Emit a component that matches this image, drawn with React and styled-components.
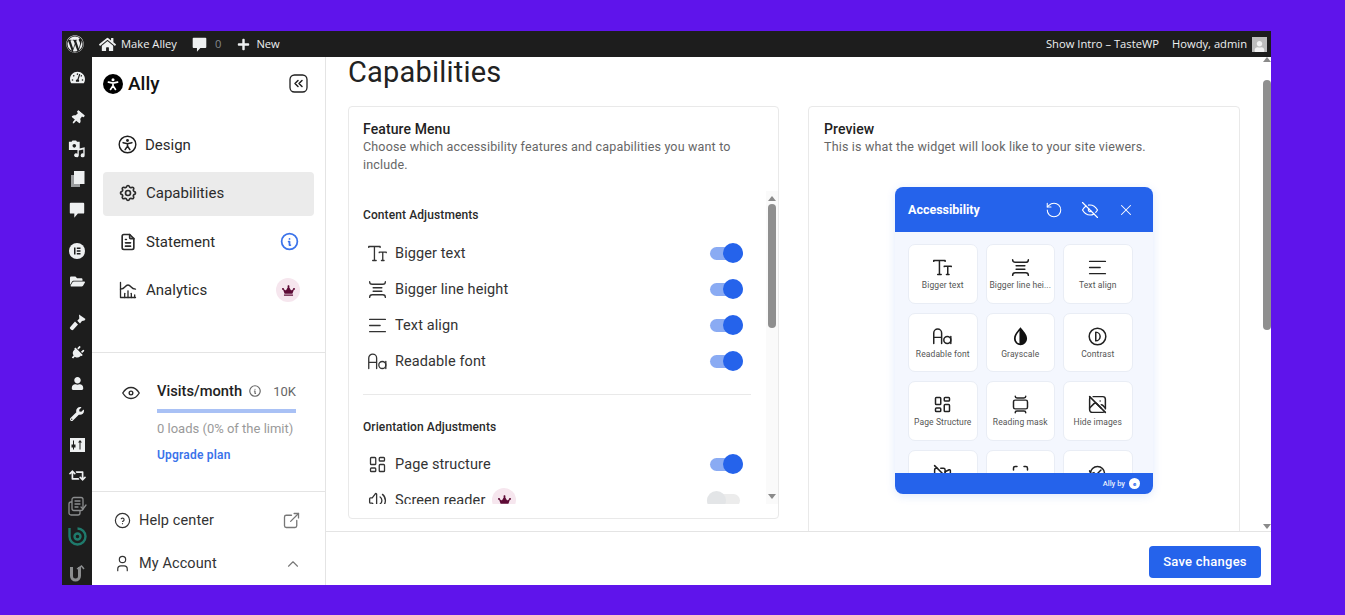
import React from "react"
import styled, { createGlobalStyle } from "styled-components"
import {
	FaWordpress,
	FaHome,
	FaPlus,
	FaTachometerAlt,
	FaThumbtack,
	FaFolderOpen,
	FaPlug,
	FaUser,
	FaWrench,
	FaRetweet,
	FaCrown,
} from "react-icons/fa"
import {
	TbSettings,
	TbFileText,
	TbChartHistogram,
	TbInfoCircle,
	TbHelpCircle,
	TbExternalLink,
	TbUser,
	TbChevronUp,
	TbEye,
	TbEyeOff,
	TbX,
	TbLayoutDashboard,
	TbPhotoOff,
	TbVideoOff,
	TbVolume,
} from "react-icons/tb"
import { RotateCcw } from "lucide-react"

const BLUE = "#2563eb"

const Global = createGlobalStyle`
	html, body { margin: 0; padding: 0; background: #5f14eb; }
	* { box-sizing: border-box; }
	body { font-family: Roboto, "Liberation Sans", sans-serif; color: #1f1f1f; }
`

// custom drawn icons
const Glyph = ({ size = 20, children, sw = 1.5 }) => (
	<svg width={size} height={size} viewBox="0 0 24 24" fill="none" stroke="currentColor" strokeWidth={sw} strokeLinecap="round" strokeLinejoin="round">
		{children}
	</svg>
)
const TextSizeIcon = (p) => (
	<Glyph {...p}>
		<path d="M2 5V4h13v1M8.500 4v16M6.500 20h4M14 11v-.5h8v.5M18 10.500V20M16.500 20h3" />
	</Glyph>
)
const LineHeightIcon = (p) => (
	<Glyph {...p}>
		<path d="M3 3c0 2 1 3 3 3h12c2 0 3-1 3-3M3 21c0-2 1-3 3-3h12c2 0 3 1 3 3M7 10h10M7 14h10" />
	</Glyph>
)
const AlignIcon = (p) => (
	<Glyph {...p}>
		<path d="M3 5h18M3 12h12M3 19h18" />
	</Glyph>
)
const FontIcon = (p) => (
	<Glyph {...p}>
		<path d="M2 20V8a4.500 4.500 0 0 1 9 0v12M2 13h9" />
		<circle cx="17.500" cy="16" r="4" />
		<path d="M21.500 12v8" />
	</Glyph>
)
const DropIcon = ({ size = 22 }) => (
	<svg width={size} height={size} viewBox="0 0 24 24">
		<path d="M12 1.500c3.500 4.500 7.500 8 7.500 13a7.500 7.500 0 0 1-15 0c0-5 4-8.500 7.500-13z" fill="#111" />
		<path d="M10.800 5.500c-2 2.800-4.300 5.400-4.300 9a5.500 5.500 0 0 0 4.300 5.400z" fill="#fff" />
	</svg>
)
const ContrastIcon = (p) => (
	<Glyph {...p}>
		<circle cx="12" cy="12" r="9.500" />
		<path d="M10 7v10M10 7a5 5 0 0 1 0 10" />
	</Glyph>
)
const MaskIcon = (p) => (
	<Glyph {...p}>
		<rect x="4" y="7" width="16" height="10" rx="2" />
		<path d="M6 2.500c0 1.500 1 2 2 2h8c1 0 2-.5 2-2M6 21.500c0-1.500 1-2 2-2h8c1 0 2 .5 2 2" />
	</Glyph>
)
const FocusIcon = (p) => (
	<Glyph {...p}>
		<path d="M4 8V6a2 2 0 0 1 2-2h2M16 4h2a2 2 0 0 1 2 2v2M4 16v2a2 2 0 0 0 2 2h2M16 20h2a2 2 0 0 0 2-2v-2" />
	</Glyph>
)
const CursorIcon = (p) => (
	<Glyph {...p}>
		<path d="M4 12a8 8 0 1 1 8 8M3 9l1.500 3.500L8 11M12 12l4-4" />
	</Glyph>
)
const AccessIcon = ({ size = 20, filled }) => (
	<svg width={size} height={size} viewBox="0 0 24 24" fill="none">
		<circle cx="12" cy="12" r={filled ? 12 : 10.500} fill={filled ? "#000" : "none"} stroke={filled ? "none" : "#1f1f1f"} strokeWidth="1.800" />
		<circle cx="12" cy="7" r="1.800" fill={filled ? "#fff" : "#1f1f1f"} />
		<path d="M6.500 9.700L12 11l5.500-1.300M12 11v3M12 14l-3 4.500M12 14l3 4.500" stroke={filled ? "#fff" : "#1f1f1f"} strokeWidth="2" strokeLinecap="round" />
	</svg>
)
const CollapseIcon = () => (
	<svg width="19" height="19" viewBox="0 0 19 19" fill="none" stroke="#1f1f1f" strokeWidth="1.300" strokeLinecap="round" strokeLinejoin="round">
		<rect x="1" y="1" width="17" height="17" rx="4.500" />
		<path d="M9 6.500L6 9.500l3 3M13 6.500l-3 3 3 3" strokeWidth="1.500" />
	</svg>
)
const BubbleIcon = ({ size = 17 }) => (
	<svg width={size} height={size} viewBox="0 0 20 20" fill="#eef0f1">
		<path d="M3 2h14a1 1 0 0 1 1 1v10a1 1 0 0 1-1 1h-6l-4 4.500V14H3a1 1 0 0 1-1-1V3a1 1 0 0 1 1-1z" />
	</svg>
)
const MediaIcon = () => (
	<svg width="18" height="18" viewBox="0 0 20 20" fill="#eef0f1">
		<path d="M1 2h3l1-1.500h4L10 2h3v9H1z" />
		<circle cx="7" cy="6.500" r="2" fill="#1d1d1d" />
		<path d="M9 19a2.200 2.200 0 1 1 1.500-3.800V10l8-2v9a2.200 2.200 0 1 1-1.500-2V10.500l-5 1.200V17A2.200 2.200 0 0 1 9 19z" />
	</svg>
)
const PagesIcon = () => (
	<svg width="15" height="16" viewBox="0 0 15 16">
		<path d="M1 4h9v12H1z" fill="#9a9c9e" />
		<path d="M4 0h10.500v13H4z" fill="#eef0f1" />
	</svg>
)
const ElementorIcon = () => (
	<svg width="16" height="16" viewBox="0 0 16 16">
		<circle cx="8" cy="8" r="8" fill="#eef0f1" />
		<path d="M5 4.500h1.500v7H5zM7.800 4.500H11.500V6H7.800zM7.800 7.250H11.500v1.500H7.800zM7.800 10H11.500v1.500H7.800z" fill="#1d1d1d" />
	</svg>
)
const BrushIcon = () => (
	<svg width="17" height="17" viewBox="0 0 17 17" fill="#eef0f1">
		<path d="M10 .5l6.500 4.500-1 1.500-2.500.5-2 2.500-2.700-2.700 2-2.300z" />
		<path d="M6 7.500l3 3-5 5.500c-1 .5-2.500-.5-3-1.500-.3-.8 0-1.300.5-1.800z" />
	</svg>
)
const SlidersIcon = () => (
	<svg width="15" height="14" viewBox="0 0 15 14">
		<path d="M0 0h15v14H0z" fill="#eef0f1" />
		<path d="M3 2.500h1v4h1.500v3H4v2H3v-2H1.500v-3H3zM10 2l2 2.500h-1.500v7h-1v-7H8z" fill="#1d1d1d" />
	</svg>
)
const ChecklistIcon = () => (
	<svg width="19" height="20" viewBox="0 0 19 20" fill="none" stroke="#8b8d8e" strokeWidth="1.300" strokeLinecap="round" strokeLinejoin="round">
		<rect x="1" y="6" width="11" height="13" rx="2" />
		<rect x="4" y="1.500" width="11" height="13" rx="2" fill="#1d1d1d" />
		<path d="M7 5h5M7 8h5M7 11h3M13 11l2 2 3-4" />
	</svg>
)
const BoldIcon = () => (
	<svg width="19" height="19" viewBox="0 0 19 19" fill="none" stroke="#1f7a6c" strokeWidth="2.400">
		<path d="M9.500 1.500a8 8 0 1 1-8 8V1" />
		<circle cx="9.500" cy="9.500" r="3" />
	</svg>
)
const UIcon = () => (
	<svg width="17" height="20" viewBox="0 0 17 20" fill="none" stroke="#8b8d8e" strokeWidth="3">
		<path d="M2.500 3v9a4 4 0 0 0 8 0V3" />
		<path d="M8 5l4.500-3L15 5" strokeWidth="1.500" />
	</svg>
)

const Page = styled.div`
	width: 1345px;
	height: 615px;
	padding: 31px 74px 30px 62px;
	overflow: hidden;
`
const Frame = styled.div`
	height: 554px;
	background: #fff;
	display: flex;
	flex-direction: column;
	overflow: hidden;
`
const AdminBar = styled.header`
	height: 26px;
	flex: none;
	background: #1d1d1d;
	color: #eef0f1;
	display: flex;
	align-items: center;
	font: 11.200px/24px "Open Sans", sans-serif;
	padding: 0 4px 0 4px;
`
const BarItem = styled.span`
	display: flex;
	align-items: center;
	gap: ${(p) => p.$gap || 6}px;
	margin-left: ${(p) => p.$ml || 0}px;
	white-space: nowrap;
	svg { flex: none; }
`
const BarCount = styled.span`
	color: #85898c;
	margin-left: 1px;
`
const Spacer = styled.span`
	flex: 1;
`
const Avatar = styled.span`
	width: 15px;
	height: 15px;
	background: #bdbdbd;
	display: flex;
	align-items: flex-end;
	justify-content: center;
	overflow: hidden;
	color: #f2f2f2;
`
const Body = styled.div`
	flex: 1;
	min-height: 0;
	display: flex;
`
const WpMenu = styled.nav`
	width: 30px;
	flex: none;
	background: #1d1d1d;
	color: #eef0f1;
	display: flex;
	flex-direction: column;
	align-items: center;
	padding-top: 5px;
	overflow: hidden;
`
const WpItem = styled.span`
	height: 30.700px;
	flex: none;
	display: flex;
	align-items: center;
	justify-content: center;
	margin-top: ${(p) => p.$sep || 0}px;
	transform: ${(p) => (p.$tilt ? `rotate(${p.$tilt}deg)` : "none")};
`
const Sidebar = styled.aside`
	width: 234px;
	flex: none;
	border-right: 1px solid #e4e4e4;
	display: flex;
	flex-direction: column;
	overflow: hidden;
`
const Brand = styled.div`
	display: flex;
	align-items: center;
	height: 53px;
	padding: 0 17px 0 11px;
	margin-bottom: 12px;
	flex: none;
`
const BrandName = styled.span`
	font-size: 19px;
	font-weight: 500;
	margin-left: 5px;
	color: #111;
	flex: 1;
`
const NavList = styled.ul`
	list-style: none;
	margin: 0;
	padding: 1.500px 11px 0;
	height: 231px;
	flex: none;
	display: flex;
	flex-direction: column;
	gap: 4.500px;
	border-bottom: 1px solid #e4e4e4;
`
const NavItem = styled.li`
	height: 44px;
	flex: none;
	display: flex;
	align-items: center;
	padding: 0 14px 2px 15px;
	gap: 8px;
	border-radius: 4px;
	font-size: 15px;
	color: #2b2b2b;
	background: ${(p) => (p.$active ? "#ebebeb" : "transparent")};
	svg { flex: none; }
`
const NavLabel = styled.span`
	flex: 1;
`
const CrownBadge = styled.span`
	width: 24px;
	height: 24px;
	border-radius: 50%;
	background: #f6e6ee;
	color: #5e0b36;
	display: inline-flex;
	align-items: center;
	justify-content: center;
	flex: none;
`
const InfoBlue = styled.span`
	color: #3b73ea;
	display: flex;
`
const Usage = styled.section`
	height: 139px;
	flex: none;
	border-bottom: 1px solid #e4e4e4;
	display: flex;
	padding: 27px 29px 0 28px;
	gap: 15px;
`
const UsageEye = styled.span`
	margin-top: 2px;
	color: #2b2b2b;
	display: flex;
	height: 24px;
`
const UsageInfo = styled.div`
	flex: 1;
`
const UsageHead = styled.div`
	display: flex;
	align-items: center;
	height: 22px;
	font-size: 14.700px;
	font-weight: 500;
	color: #222;
	gap: 6px;
	svg { color: #666; }
`
const UsageLimit = styled.span`
	margin-left: auto;
	font-size: 13px;
	font-weight: 400;
	color: #666;
`
const UsageBar = styled.div`
	height: 4px;
	background: #a9c1f5;
	margin-top: 7px;
`
const UsageText = styled.div`
	font-size: 13px;
	color: #9a9a9a;
	margin-top: 8px;
	line-height: 16px;
`
const UpgradeLink = styled.a`
	display: block;
	font-size: 12px;
	font-weight: 600;
	letter-spacing: 0.2px;
	color: #3b73ea;
	margin-top: 11px;
`
const BottomRow = styled.div`
	height: 43px;
	flex: none;
	display: flex;
	align-items: center;
	padding: 0 23px 0 21px;
	gap: 7px;
	font-size: 14.500px;
	letter-spacing: 0.1px;
	color: #333;
	svg { flex: none; }
`
const BottomIcon = styled.span`
	margin-left: auto;
	display: flex;
	color: #777;
`
const BottomList = styled.div`
	padding-top: 7px;
`
const Main = styled.main`
	flex: 1;
	min-width: 0;
	display: flex;
	flex-direction: column;
`
const MainTop = styled.div`
	flex: 1;
	min-height: 0;
	display: flex;
`
const Content = styled.div`
	flex: 1;
	min-width: 0;
	padding: 0 23px 0 22px;
	overflow: hidden;
`
const Title = styled.h1`
	margin: 0;
	height: 49px;
	font-size: 29px;
	line-height: 30px;
	font-weight: 400;
	letter-spacing: 0.2px;
	color: #222;
`
const Cards = styled.div`
	display: flex;
	gap: 29px;
	align-items: flex-start;
`
const Card = styled.section`
	flex: 0 0 ${(p) => p.$w}px;
	height: ${(p) => p.$h}px;
	border: 1px solid #e9e9e9;
	border-radius: 4px;
	overflow: hidden;
	display: flex;
	flex-direction: column;
`
const CardHead = styled.div`
	padding: 14px 14px 0 ${(p) => p.$pl || 14}px;
	height: ${(p) => p.$h || 84}px;
	flex: none;
`
const CardTitle = styled.h2`
	margin: 0;
	font-size: 14px;
	line-height: 17px;
	font-weight: 500;
	letter-spacing: 0.1px;
	color: #222;
`
const CardDesc = styled.p`
	margin: 0;
	font-size: 12.500px;
	line-height: 18px;
	letter-spacing: 0.17px;
	color: #666;
`
const FeatureWrap = styled.div`
	display: flex;
	height: 313px;
	flex: none;
	padding-left: 14px;
`
const FeatureList = styled.div`
	flex: 1;
	min-width: 0;
	padding-right: 15px;
	overflow: hidden;
`
const GroupTitle = styled.h3`
	margin: 0;
	height: ${(p) => p.$h}px;
	padding-top: ${(p) => p.$pt}px;
	font-size: 12px;
	line-height: 16px;
	font-weight: 500;
	letter-spacing: 0.1px;
	color: #2a2a2a;
`
const Row = styled.div`
	height: 36px;
	display: flex;
	align-items: center;
	padding: 0 8px 0 4px;
	gap: 7px;
	font-size: 14.500px;
	letter-spacing: 0.1px;
	color: #333;
	svg { flex: none; }
`
const RowLabel = styled.span`
	white-space: nowrap;
`
const Toggle = styled.span`
	margin-left: auto;
	margin-right: ${(p) => (p.$on ? 0 : 3)}px;
	width: 33px;
	height: 13px;
	border-radius: 7px;
	background: ${(p) => (p.$on ? "#8aabf3" : "#ececec")};
	display: flex;
	align-items: center;
	justify-content: ${(p) => (p.$on ? "flex-end" : "flex-start")};
	&::after {
		content: "";
		width: ${(p) => (p.$on ? 20 : 19)}px;
		height: ${(p) => (p.$on ? 20 : 19)}px;
		border-radius: 50%;
		background: ${(p) => (p.$on ? BLUE : "#e3e5e7")};
	}
`
const Divider = styled.hr`
	border: 0;
	border-top: 1px solid #e9e9e9;
	margin: 15px 0 0 0;
`
const ScrollTrack = styled.div`
	width: ${(p) => p.$w}px;
	flex: none;
	background: ${(p) => p.$bg || "transparent"};
	display: flex;
	flex-direction: column;
	align-items: center;
	padding: ${(p) => p.$pad || "0"};
`
const ScrollArrow = styled.span`
	width: 0;
	height: 0;
	flex: none;
	border-left: 4px solid transparent;
	border-right: 4px solid transparent;
	${(p) => (p.$down ? "border-top: 5px solid #8a8a8a;" : "border-bottom: 5px solid #8a8a8a;")}
`
const ScrollThumb = styled.span`
	width: 8px;
	height: ${(p) => p.$h}px;
	flex: none;
	border-radius: 4px;
	background: #8f8f8f;
	margin-top: ${(p) => p.$mt}px;
	margin-bottom: auto;
`
const WidgetArea = styled.div`
	flex: 1;
	padding: 0 0 0 86px;
`
const Widget = styled.div`
	width: 258px;
	height: 307px;
	border-radius: 8px;
	box-shadow: 0 2px 10px rgba(37, 99, 235, 0.14);
	overflow: hidden;
	display: flex;
	flex-direction: column;
	background: #f4f7fe;
`
const WidgetHead = styled.div`
	height: 45px;
	flex: none;
	background: ${BLUE};
	color: #fff;
	display: flex;
	align-items: center;
	padding: 0 18px 0 13px;
	font-size: 12.500px;
	font-weight: 700;
	svg { flex: none; }
`
const WidgetTitle = styled.span`
	flex: 1;
`
const WidgetActions = styled.span`
	display: flex;
	align-items: center;
	gap: 17px;
`
const Tiles = styled.div`
	flex: 1;
	min-height: 0;
	overflow: hidden;
	padding: 12px 0 0 13px;
	display: grid;
	grid-template-columns: repeat(3, 69.500px);
	grid-auto-rows: 59.500px;
	gap: 9px 8px;
`
const Tile = styled.div`
	background: #fff;
	border: 1px solid #e9edf5;
	border-radius: 7px;
	display: flex;
	flex-direction: column;
	align-items: center;
	padding-top: 12px;
	color: #222;
	svg { flex: none; }
`
const TileLabel = styled.span`
	font-size: 8.500px;
	line-height: 11px;
	margin-top: 2px;
	color: #555;
	letter-spacing: 0.1px;
	white-space: nowrap;
`
const WidgetFoot = styled.div`
	height: 21px;
	flex: none;
	background: ${BLUE};
	color: #e8eefc;
	display: flex;
	align-items: center;
	justify-content: flex-end;
	padding-right: 13px;
	gap: 4px;
	font-size: 7.500px;
	font-weight: 500;
`
const FootLogo = styled.span`
	width: 11px;
	height: 11px;
	border-radius: 50%;
	background: #fff;
	color: ${BLUE};
	font-size: 6px;
	font-weight: 700;
	display: flex;
	align-items: center;
	justify-content: center;
`
const Footer = styled.footer`
	height: 54px;
	flex: none;
	border-top: 1px solid #e4e4e4;
	display: flex;
	align-items: center;
	justify-content: flex-end;
	padding: 7px 10px 0 0;
`
const SaveButton = styled.button`
	width: 112px;
	height: 32px;
	border: 0;
	border-radius: 4px;
	background: ${BLUE};
	color: #fff;
	font: 500 13px/32px Roboto, sans-serif;
	letter-spacing: 0.25px;
	padding: 0;
`

const wpIcons = [
	{ el: <FaTachometerAlt size={15} /> },
	{ el: <FaThumbtack size={14} />, sep: 10, tilt: 40 },
	{ el: <MediaIcon /> },
	{ el: <PagesIcon /> },
	{ el: <BubbleIcon size={18} /> },
	{ el: <ElementorIcon />, sep: 10 },
	{ el: <FaFolderOpen size={15} /> },
	{ el: <BrushIcon />, sep: 10 },
	{ el: <FaPlug size={14} />, tilt: 45 },
	{ el: <FaUser size={13} /> },
	{ el: <FaWrench size={14} /> },
	{ el: <SlidersIcon /> },
	{ el: <FaRetweet size={17} /> },
	{ el: <ChecklistIcon /> },
	{ el: <BoldIcon /> },
	{ el: <UIcon />, sep: 6 },
]

const navItems = [
	{ label: "Design", icon: <AccessIcon size={19} /> },
	{ label: "Capabilities", icon: <TbSettings size={20} />, active: true },
	{ label: "Statement", icon: <TbFileText size={20} />, extra: <InfoBlue><TbInfoCircle size={21} /></InfoBlue> },
	{ label: "Analytics", icon: <TbChartHistogram size={20} strokeWidth={1.6} />, extra: <CrownBadge><FaCrown size={13} /></CrownBadge> },
]

const contentRows = [
	{ label: "Bigger text", icon: <TextSizeIcon size={21} /> },
	{ label: "Bigger line height", icon: <LineHeightIcon size={21} /> },
	{ label: "Text align", icon: <AlignIcon size={21} /> },
	{ label: "Readable font", icon: <FontIcon size={21} /> },
]

const tiles = [
	{ label: "Bigger text", icon: <TextSizeIcon size={21} sw={1.7} /> },
	{ label: "Bigger line hei...", icon: <LineHeightIcon size={21} sw={1.7} /> },
	{ label: "Text align", icon: <AlignIcon size={21} sw={1.7} /> },
	{ label: "Readable font", icon: <FontIcon size={21} sw={1.7} /> },
	{ label: "Grayscale", icon: <DropIcon size={21} /> },
	{ label: "Contrast", icon: <ContrastIcon size={21} sw={1.7} /> },
	{ label: "Page Structure", icon: <TbLayoutDashboard size={21} strokeWidth={1.7} /> },
	{ label: "Reading mask", icon: <MaskIcon size={21} sw={1.7} /> },
	{ label: "Hide images", icon: <TbPhotoOff size={21} strokeWidth={1.7} /> },
	{ label: "Pause animations", icon: <TbVideoOff size={21} strokeWidth={1.7} /> },
	{ label: "Highlight focus", icon: <FocusIcon size={21} sw={1.7} /> },
	{ label: "Bigger cursor", icon: <CursorIcon size={21} sw={1.7} /> },
]

export default function App() {
	return (
		<Page>
			<Global />
			<Frame>
				<AdminBar>
					<BarItem><FaWordpress size={18} /></BarItem>
					<BarItem $ml={15} $gap={5}><FaHome size={17} />Make Alley</BarItem>
					<BarItem $ml={14}><BubbleIcon /><BarCount>0</BarCount></BarItem>
					<BarItem $ml={16}><FaPlus size={13} />New</BarItem>
					<Spacer />
					<BarItem>Show Intro – TasteWP</BarItem>
					<BarItem $ml={13} $gap={5}>
						Howdy, admin
						<Avatar><FaUser size={11} /></Avatar>
					</BarItem>
				</AdminBar>
				<Body>
					<WpMenu>
						{wpIcons.map((item, i) => (
							<WpItem key={i} $sep={item.sep} $tilt={item.tilt}>{item.el}</WpItem>
						))}
					</WpMenu>
					<Sidebar>
						<Brand>
							<AccessIcon size={20} filled />
							<BrandName>Ally</BrandName>
							<CollapseIcon />
						</Brand>
						<NavList>
							{navItems.map((item) => (
								<NavItem key={item.label} $active={item.active}>
									{item.icon}
									<NavLabel>{item.label}</NavLabel>
									{item.extra}
								</NavItem>
							))}
						</NavList>
						<Usage>
							<UsageEye><TbEye size={22} strokeWidth={1.5} /></UsageEye>
							<UsageInfo>
								<UsageHead>
									Visits/month
									<TbInfoCircle size={14} />
									<UsageLimit>10K</UsageLimit>
								</UsageHead>
								<UsageBar />
								<UsageText>0 loads (0% of the limit)</UsageText>
								<UpgradeLink>Upgrade plan</UpgradeLink>
							</UsageInfo>
						</Usage>
						<BottomList>
							<BottomRow>
								<TbHelpCircle size={19} strokeWidth={1.5} />
								Help center
								<BottomIcon><TbExternalLink size={21} strokeWidth={1.5} /></BottomIcon>
							</BottomRow>
							<BottomRow>
								<TbUser size={19} strokeWidth={1.5} />
								My Account
								<BottomIcon><TbChevronUp size={18} strokeWidth={1.5} /></BottomIcon>
							</BottomRow>
						</BottomList>
					</Sidebar>
					<Main>
						<MainTop>
							<Content>
								<Title>Capabilities</Title>
								<Cards>
									<Card $w={431} $h={413}>
										<CardHead>
											<CardTitle>Feature Menu</CardTitle>
											<CardDesc>Choose which accessibility features and capabilities you want to include.</CardDesc>
										</CardHead>
										<FeatureWrap>
											<FeatureList>
												<GroupTitle $h={44} $pt={16}>Content Adjustments</GroupTitle>
												{contentRows.map((row) => (
													<Row key={row.label}>
														{row.icon}
														<RowLabel>{row.label}</RowLabel>
														<Toggle $on />
													</Row>
												))}
												<Divider />
												<GroupTitle $h={51} $pt={24}>Orientation Adjustments</GroupTitle>
												<Row>
													<TbLayoutDashboard size={21} strokeWidth={1.5} />
													<RowLabel>Page structure</RowLabel>
													<Toggle $on />
												</Row>
												<Row>
													<TbVolume size={21} strokeWidth={1.5} />
													<RowLabel>Screen reader</RowLabel>
													<CrownBadge><FaCrown size={13} /></CrownBadge>
													<Toggle />
												</Row>
											</FeatureList>
											<ScrollTrack $w={12} $bg="#fafafa" $pad="5px 0">
												<ScrollArrow />
												<ScrollThumb $h={124} $mt={3} />
												<ScrollArrow $down />
											</ScrollTrack>
										</FeatureWrap>
									</Card>
									<Card $w={432} $h={460}>
										<CardHead $h={80} $pl={15}>
											<CardTitle>Preview</CardTitle>
											<CardDesc>This is what the widget will look like to your site viewers.</CardDesc>
										</CardHead>
										<WidgetArea>
											<Widget>
												<WidgetHead>
													<WidgetTitle>Accessibility</WidgetTitle>
													<WidgetActions>
														<RotateCcw size={18} strokeWidth={1.4} />
														<TbEyeOff size={20} strokeWidth={1.4} />
														<TbX size={18} strokeWidth={1.4} />
													</WidgetActions>
												</WidgetHead>
												<Tiles>
													{tiles.map((tile) => (
														<Tile key={tile.label}>
															{tile.icon}
															<TileLabel>{tile.label}</TileLabel>
														</Tile>
													))}
												</Tiles>
												<WidgetFoot>
													Ally by
													<FootLogo>e</FootLogo>
												</WidgetFoot>
											</Widget>
										</WidgetArea>
									</Card>
								</Cards>
							</Content>
							<ScrollTrack $w={8} $pad="0 0 2px">
								<ScrollArrow />
								<ScrollThumb $h={250} $mt={18} />
								<ScrollArrow $down />
							</ScrollTrack>
						</MainTop>
						<Footer>
							<SaveButton>Save changes</SaveButton>
						</Footer>
					</Main>
				</Body>
			</Frame>
		</Page>
	)
}
